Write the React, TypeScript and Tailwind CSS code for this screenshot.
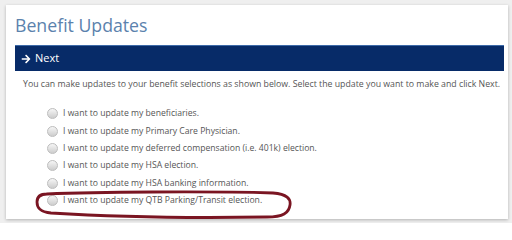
import { FaArrowRight } from 'react-icons/fa'

const options = [
  'I want to update my beneficiaries.',
  'I want to update my Primary Care Physician.',
  'I want to update my deferred compensation (i.e. 401k) election.',
  'I want to update my HSA election.',
  'I want to update my HSA banking information.',
  'I want to update my QTB Parking/Transit election.',
]

export default function App() {
  return (
    <div className="w-[512px] h-[223px] bg-[#efefef] pt-[5px] pl-[6px] overflow-hidden font-['Open_Sans',sans-serif]">
      <div className="relative w-[502px] h-[214px] bg-white shadow-[0_1px_3px_rgba(0,0,0,0.25)] pl-[9px] pr-[4px]">
        {/* Title */}
        <h1 className="h-[40px] pt-[9px] text-[17.7px] leading-[22px] text-[#5b82ad]">Benefit Updates</h1>

        {/* Next bar */}
        <div className="h-[26px] bg-[#072b68] border-t border-[#3d6aa8] flex items-center gap-[4px] pl-[6px] text-white text-[11px]">
          <FaArrowRight className="w-[10px] h-[10px]" />
          <span>Next</span>
        </div>

        <p className="mt-[7px] pl-[8px] text-[8.75px] leading-[13px] text-[#555] whitespace-nowrap">
          You can make updates to your benefit selections as shown below. Select the update you want to make and click Next.
        </p>

        <ul className="mt-[14px] pl-[32px] flex flex-col">
          {options.map((o) => (
            <li key={o} className="h-[17.4px] flex items-center gap-[5px] text-[8.65px] text-[#555] whitespace-nowrap">
              <span className="w-[11px] h-[11px] rounded-full border border-[#bdbdbd] bg-gradient-to-b from-[#f6f6f6] to-[#cdcdcd] shrink-0" />
              <span>{o}</span>
            </li>
          ))}
        </ul>

        {/* Annotation circle */}
        <svg className="absolute left-[29px] top-[185px] w-[258px] h-[30px] pointer-events-none" viewBox="0 0 258 30" fill="none">
          <path
            d="M12 4 C 60 2, 170 1, 238 3 C 252 4, 256 9, 255 15 C 254 23, 248 27, 232 27 C 170 28, 80 27, 16 23 C 5 22, 2 18, 2 12 C 2 7, 5 4, 12 4"
            stroke="#7a1522"
            strokeWidth="2.8"
            strokeLinecap="round"
          />
        </svg>
      </div>
    </div>
  )
}
